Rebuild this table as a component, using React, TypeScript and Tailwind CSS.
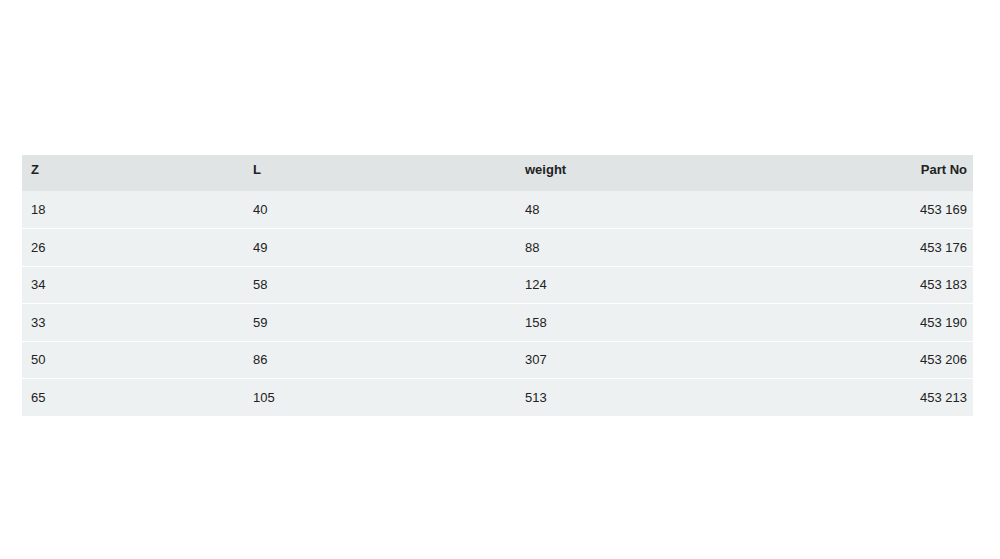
import * as React from "react";

const rows = [
	["18", "40", "48", "453 169"],
	["26", "49", "88", "453 176"],
	["34", "58", "124", "453 183"],
	["33", "59", "158", "453 190"],
	["50", "86", "307", "453 206"],
	["65", "105", "513", "453 213"],
];

export default function App() {
	return (
		<div className="h-[559px] w-full bg-white pt-[155px] pl-[22px] pr-[27px] font-['Liberation_Sans',Arial,sans-serif] text-[13px] text-[#222]">
			<table className="w-[951px] border-collapse">
				<thead>
					<tr className="h-[36px] bg-[#e0e4e5]">
						<th className="w-[222px] pb-[6px] pl-[9px] text-left font-semibold">Z</th>
						<th className="w-[272px] pb-[6px] pl-[9px] text-left font-semibold">L</th>
						<th className="pb-[6px] pl-[9px] text-left font-semibold">weight</th>
						<th className="pb-[6px] pr-[6px] text-right font-semibold">Part No</th>
					</tr>
				</thead>
				<tbody>
					{rows.map((r, i) => (
						<tr
							key={i}
							className={
								i === 0
									? "h-[37.5px] bg-[#eef1f2]"
									: "h-[37.5px] border-t border-white bg-[#eef1f2]"
							}>
							<td className="pl-[9px]">{r[0]}</td>
							<td className="pl-[9px]">{r[1]}</td>
							<td className="pl-[9px]">{r[2]}</td>
							<td className="pr-[6px] text-right">{r[3]}</td>
						</tr>
					))}
				</tbody>
			</table>
		</div>
	);
}
